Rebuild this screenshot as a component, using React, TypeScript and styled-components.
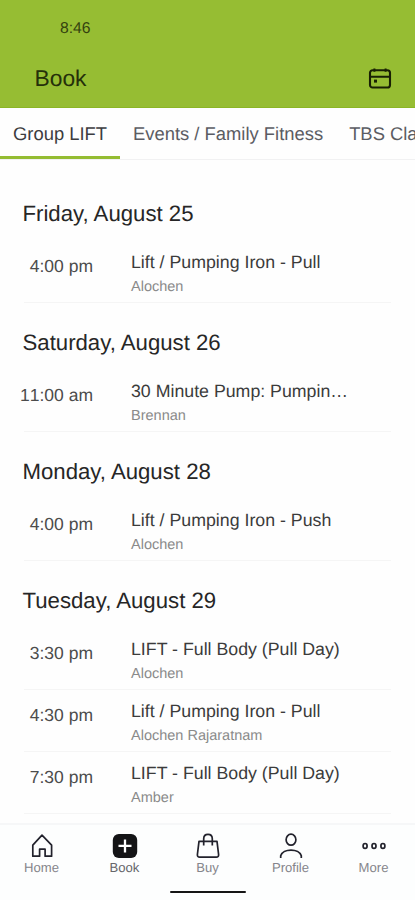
import React from "react";
import styled, { createGlobalStyle } from "styled-components";

const GlobalStyle = createGlobalStyle`
  * { box-sizing: border-box; }
  html, body { margin: 0; padding: 0; background: #fff; overflow: hidden; }
  body { font-family: "Liberation Sans", Arial, sans-serif; text-rendering: geometricPrecision; }
`;

const Screen = styled.div`
  width: 415px;
  height: 900px;
  display: flex;
  flex-direction: column;
  overflow: hidden;
  background: #fefefe;
`;

const Header = styled.header`
  height: 108px;
  flex: none;
  background: #96bd33;
  border-bottom: 1px solid #8bb526;
  color: #192004;
`;

const StatusBar = styled.div`
  height: 56px;
  padding: 20px 0 0 60px;
  font-size: 15.7px;
  line-height: 18px;
  color: #34420f;
`;

const TitleBar = styled.div`
  height: 44px;
  padding: 0 23px 0 34.5px;
  display: flex;
  align-items: center;
  justify-content: space-between;
`;

const Title = styled.h1`
  margin: 0;
  font-size: 22.8px;
  line-height: 28px;
  font-weight: 400;
  color: #25300a;
`;

const Tabs = styled.nav`
  height: 52px;
  flex: none;
  display: flex;
  overflow: hidden;
  border-bottom: 1px solid #f1f1f2;
`;

const Tab = styled.div<{ $active?: boolean }>`
  flex: none;
  height: 51px;
  padding: 0 13px;
  border-bottom: 3px solid ${(p) => (p.$active ? "#94bc32" : "transparent")};
  font-size: 18.4px;
  line-height: 52px;
  white-space: nowrap;
  color: ${(p) => (p.$active ? "#3c3c40" : "#5b5c63")};
`;

const List = styled.main`
  flex: 1;
  min-height: 0;
  overflow: hidden;
  padding: 14px 24px 0;
`;

const DateHeading = styled.h2`
  height: 67px;
  margin: 0 0 0 -1.5px;
  padding-top: 26px;
  font-size: 22.2px;
  line-height: 28px;
  font-weight: 400;
  color: #262626;
`;

const ClassRow = styled.div`
  height: 62px;
  display: grid;
  grid-template-columns: 69px 1fr;
  column-gap: 38px;
  border-bottom: 1px solid #f5f5f5;
`;

const Time = styled.div`
  display: flex;
  justify-content: flex-end;
  padding-top: 15px;
  font-size: 17.5px;
  line-height: 21px;
  font-kerning: none;
  white-space: nowrap;
  color: #4c4c4c;
`;

const ClassName = styled.div`
  padding-top: 11px;
  font-size: 17.75px;
  line-height: 21px;
  white-space: nowrap;
  color: #3b3b3b;
`;

const Instructor = styled.div`
  padding-top: 6px;
  font-size: 14.5px;
  line-height: 16px;
  color: #8a8a8a;
`;

const BottomBar = styled.footer`
  height: 77px;
  flex: none;
  border-top: 2px solid #f6f7f8;
  background: #fdfefe;
  display: flex;
  flex-direction: column;
  align-items: center;
`;

const NavItems = styled.div`
  width: 100%;
  height: 66px;
  display: grid;
  grid-template-columns: repeat(5, 1fr);
`;

const NavItem = styled.div`
  display: flex;
  flex-direction: column;
  align-items: center;
  padding-top: 7px;
  color: #22222c;
`;

const NavLabel = styled.span<{ $active?: boolean }>`
  margin-top: 0;
  font-size: 13.1px;
  line-height: 15px;
  color: ${(p) => (p.$active ? "#66666a" : "#85858b")};
`;

const HomeIndicator = styled.div`
  width: 76px;
  height: 2px;
  border-radius: 1px;
  background: #151515;
`;

const Glyph = styled.svg`
  display: block;
  flex: none;
  fill: none;
  stroke: currentColor;
  stroke-width: 1.7;
`;

const CalendarIcon = () => (
  <Glyph width="24" height="24" viewBox="0 0 24 24">
    <rect x="2" y="4.2" width="20" height="17.3" rx="2.6" strokeWidth="2.1" />
    <path d="M2 10.7H22M6.4 2.4V5.8M17.6 2.4V5.8" strokeWidth="2" />
    <rect x="6" y="13.6" width="3" height="3" fill="currentColor" stroke="none" />
  </Glyph>
);

const HomeIcon = () => (
  <Glyph width="28" height="28" viewBox="0 0 28 28">
    <path d="M4.8 13.2 14 3.2 23.6 13.2V24.2H17.1V17.2H11.6V24.2H4.8Z" strokeLinejoin="round" />
  </Glyph>
);

const BookIcon = () => (
  <Glyph width="28" height="28" viewBox="0 0 28 28">
    <rect x="1.8" y="1.9" width="24.4" height="24" rx="6" fill="#141416" stroke="none" />
    <path d="M14 7.4V20.4M7.5 13.9H20.5" stroke="#fff" strokeWidth="2.3" />
  </Glyph>
);

const BagIcon = () => (
  <Glyph width="28" height="28" viewBox="0 0 28 28">
    <path d="M5 9.3H23L24.6 22.5Q24.8 25.1 22.3 25.1H5.7Q3.2 25.1 3.4 22.5Z" strokeLinejoin="round" />
    <path d="M9.7 13.6V6.8Q9.7 2.4 14 2.4T18.3 6.8V13.6" />
  </Glyph>
);

const ProfileIcon = () => (
  <Glyph width="28" height="28" viewBox="0 0 28 28">
    <ellipse cx="14" cy="7.7" rx="4.9" ry="5.5" />
    <path d="M3.7 26V23.8C5.6 16.1 22.4 16.1 24.3 23.8V26" />
  </Glyph>
);

const MoreIcon = () => (
  <Glyph width="28" height="28" viewBox="0 0 28 28">
    <ellipse cx="5.1" cy="13.9" rx="2" ry="2.4" />
    <ellipse cx="14" cy="13.9" rx="2" ry="2.4" />
    <ellipse cx="22.9" cy="13.9" rx="2" ry="2.4" />
  </Glyph>
);

const schedule = [
  { date: "Friday, August 25", classes: [["4:00 pm", "Lift / Pumping Iron - Pull", "Alochen"]] },
  { date: "Saturday, August 26", classes: [["11:00 am", "30 Minute Pump: Pumpin…", "Brennan"]] },
  { date: "Monday, August 28", classes: [["4:00 pm", "Lift / Pumping Iron - Push", "Alochen"]] },
  {
    date: "Tuesday, August 29",
    classes: [
      ["3:30 pm", "LIFT - Full Body (Pull Day)", "Alochen"],
      ["4:30 pm", "Lift / Pumping Iron - Pull", "Alochen Rajaratnam"],
      ["7:30 pm", "LIFT - Full Body (Pull Day)", "Amber"],
    ],
  },
];

const navigation = [
  { label: "Home", Icon: HomeIcon },
  { label: "Book", Icon: BookIcon, active: true },
  { label: "Buy", Icon: BagIcon },
  { label: "Profile", Icon: ProfileIcon },
  { label: "More", Icon: MoreIcon },
];

export default function App() {
  return (
    <>
      <GlobalStyle />
      <Screen>
        <Header>
          <StatusBar>8:46</StatusBar>
          <TitleBar>
            <Title>Book</Title>
            <CalendarIcon />
          </TitleBar>
        </Header>
        <Tabs>
          <Tab $active>Group LIFT</Tab>
          <Tab>Events / Family Fitness</Tab>
          <Tab>TBS Classes</Tab>
        </Tabs>
        <List>
          {schedule.map((day) => (
            <section key={day.date}>
              <DateHeading>{day.date}</DateHeading>
              {day.classes.map(([time, name, instructor]) => (
                <ClassRow key={time}>
                  <Time>{time}</Time>
                  <div>
                    <ClassName>{name}</ClassName>
                    <Instructor>{instructor}</Instructor>
                  </div>
                </ClassRow>
              ))}
            </section>
          ))}
        </List>
        <BottomBar>
          <NavItems>
            {navigation.map(({ label, Icon, active }) => (
              <NavItem key={label}>
                <Icon />
                <NavLabel $active={active}>{label}</NavLabel>
              </NavItem>
            ))}
          </NavItems>
          <HomeIndicator />
        </BottomBar>
      </Screen>
    </>
  );
}
